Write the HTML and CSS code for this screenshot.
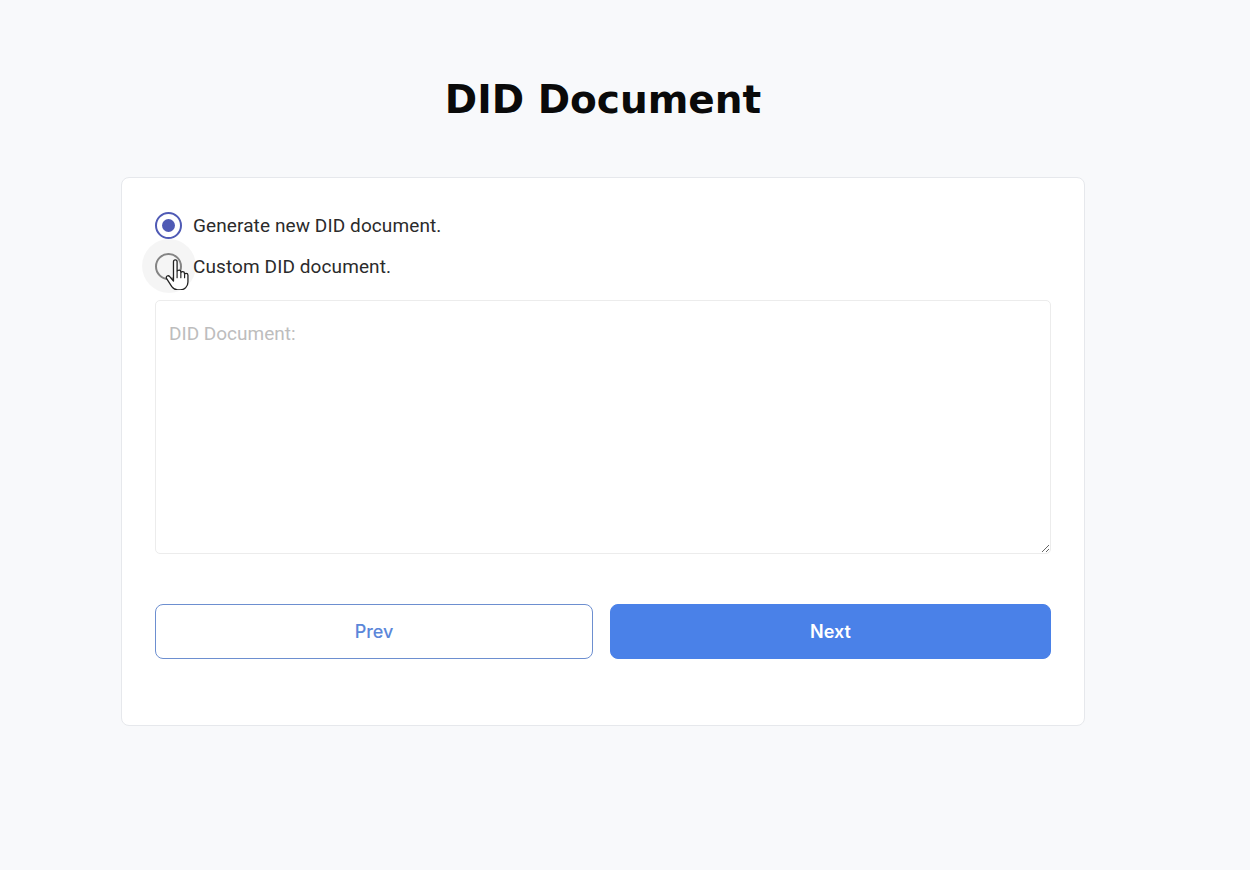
FILE: index.html
```html
<!DOCTYPE html>
<html>
<head>
<meta charset="utf-8">
<link rel="stylesheet" href="styles.css">
</head>
<body>
<main class="page">
  <h1 class="title">DID Document</h1>
  <section class="card">
    <div class="options">
      <label class="option">
        <span class="radio checked"><span class="dot"></span></span>
        <span class="option-text">Generate new DID document.</span>
      </label>
      <label class="option">
        <span class="radio hover">
          <span class="halo"></span>
          <svg class="cursor" width="26" height="31" viewBox="0 0 20 24">
            <path d="M6.5 2.2c0-.9.6-1.5 1.4-1.5s1.4.6 1.4 1.5v7.3c.3-.6.9-.9 1.5-.9.8 0 1.4.6 1.4 1.4v.5c.3-.5.8-.8 1.4-.8.8 0 1.4.6 1.4 1.4v.6c.3-.4.8-.6 1.3-.6.8 0 1.4.6 1.4 1.4v5.3c0 3.5-2.6 6.1-6 6.1h-2c-2 0-3.4-.9-4.5-2.5L1.2 15.2c-.5-.7-.3-1.6.4-2 .7-.4 1.5-.2 2 .4l2.9 3.4z" fill="#fff" stroke="#222" stroke-width="1" stroke-linejoin="round"/>
            <path d="M9.3 10v4.5M12.2 11v3.5M15.1 12v2.5" stroke="#222" stroke-width="0.9" fill="none" stroke-linecap="round"/>
          </svg>
        </span>
        <span class="option-text">Custom DID document.</span>
      </label>
    </div>
    <textarea class="doc" placeholder="DID Document:"></textarea>
    <div class="actions">
      <button class="btn btn-prev">Prev</button>
      <button class="btn btn-next">Next</button>
    </div>
  </section>
</main>
</body>
</html>
```

FILE: styles.css
```css
* { box-sizing: border-box; }
html, body { margin: 0; padding: 0; }
body {
  background: #f8f9fb;
  font-family: Roboto, "Liberation Sans", sans-serif;
  width: 1250px;
  height: 870px;
  overflow: hidden;
}
.page {
  width: 964px;
  margin-left: 121px;
  padding-top: 74px;
}
.title {
  margin: 0;
  text-align: center;
  font-family: "DejaVu Sans", "Liberation Sans", sans-serif;
  font-weight: 700;
  font-size: 39px;
  line-height: 52px;
  letter-spacing: 0;
  color: #0a0a0a;
}
.card {
  margin-top: 51px;
  background: #fff;
  border: 1px solid #e6e8ec;
  border-radius: 8px;
  padding: 34px 33px 66px 33px;
  height: 549px;
}
.options {
  display: flex;
  flex-direction: column;
  gap: 15px;
}
.option {
  display: flex;
  align-items: center;
  gap: 11px;
  height: 26px;
}
.option-text {
  font-size: 19px;
  color: #2b2b2b;
  letter-spacing: 0.1px;
}
.radio {
  position: relative;
  width: 27px;
  height: 27px;
  border-radius: 50%;
  border: 2px solid #7a7a7a;
  display: flex;
  align-items: center;
  justify-content: center;
  flex: none;
}
.radio.checked { border-color: #4f5ab5; }
.radio .dot {
  width: 13px;
  height: 13px;
  border-radius: 50%;
  background: #4f5ab5;
}
.radio.hover { border-color: #8a8a8a; }
.halo {
  position: absolute;
  left: 50%;
  top: 50%;
  width: 54px;
  height: 54px;
  margin: -27px 0 0 -27px;
  border-radius: 50%;
  background: rgba(0, 0, 0, 0.04);
}
.cursor {
  position: absolute;
  left: 8px;
  top: 4px;
}
.doc {
  display: block;
  margin-top: 21px;
  width: 896px;
  height: 254px;
  border: 1px solid #ececec;
  border-radius: 5px;
  padding: 21px 13px;
  font-family: Roboto, "Liberation Sans", sans-serif;
  font-size: 19px;
  color: #333;
  resize: vertical;
  outline: none;
  background: #fff;
}
.doc::placeholder { color: #bdbdbd; }
.actions {
  display: flex;
  gap: 17px;
  margin-top: 50px;
}
.btn {
  height: 55px;
  border-radius: 8px;
  font-family: Inter, "Liberation Sans", sans-serif;
  font-size: 18px;
  font-weight: 600;
  cursor: pointer;
}
.btn-prev {
  flex: 0 0 438px;
  background: #fff;
  border: 1.5px solid #6d8fd0;
  color: #5b86d9;
  font-weight: 500;
}
.btn-next {
  flex: 1;
  background: #4a81e8;
  border: 1px solid #4a81e8;
  color: #fff;
}
```
